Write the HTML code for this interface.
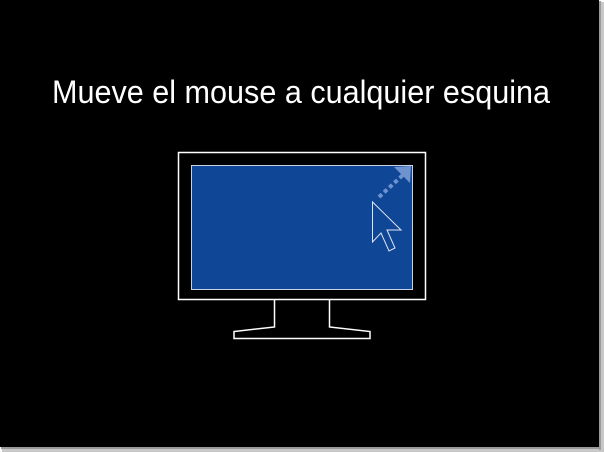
<!DOCTYPE html>
<html><head><meta charset="utf-8"><style>
html,body{margin:0;padding:0;background:#fff;width:604px;height:452px;overflow:hidden}
</style></head><body>
<svg width="604" height="452" viewBox="0 0 604 452" xmlns="http://www.w3.org/2000/svg">
<rect x="0" y="0" width="604" height="452" fill="#ffffff"/>
<rect x="600" y="2" width="4" height="450" fill="#c8c8c8"/>
<rect x="2" y="448" width="602" height="4" fill="#c8c8c8"/>
<rect x="599" y="1" width="2" height="449" fill="#9a9a9a"/>
<rect x="1" y="447" width="600" height="2" fill="#9a9a9a"/>
<rect x="0" y="0" width="599" height="447" fill="#000"/>
<text x="52" y="103" font-family="Liberation Sans, sans-serif" font-size="32" fill="#fff" textLength="498" lengthAdjust="spacingAndGlyphs">Mueve el mouse a cualquier esquina</text>
<rect x="178.5" y="152.5" width="247" height="147" fill="none" stroke="#fff" stroke-width="1.5"/>
<rect x="191.5" y="165.5" width="221" height="124" fill="#0f4696" stroke="#c8d2e6" stroke-width="1"/>
<path d="M274.5 300 V327 L234 331.5 V338.5 H370 V331.5 L329.5 327 V300" fill="none" stroke="#fff" stroke-width="1.5"/>
<line x1="379" y1="197" x2="404" y2="174" stroke="#6f93cf" stroke-width="4" stroke-dasharray="4 3"/>
<path d="M394 167 L411 166 L410 183 Z" fill="#6f93cf"/>
<path d="M372.5 202 L372.5 242 L381 233 L389 251 L395 248 L387 230 L401 230 Z" fill="none" stroke="#dfe6f3" stroke-width="1"/>
</svg>
</body></html>
